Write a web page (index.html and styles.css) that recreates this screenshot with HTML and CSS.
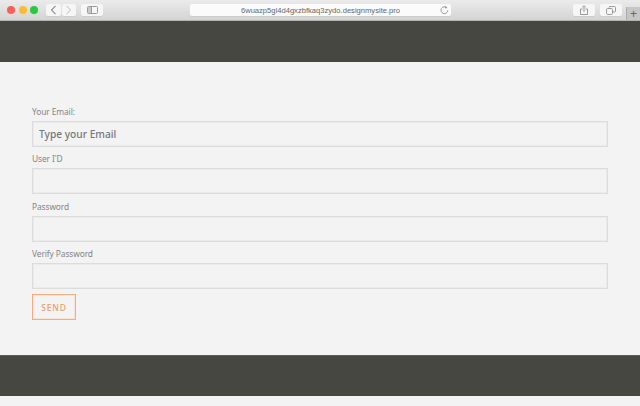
FILE: index.html
```html
<!DOCTYPE html>
<html lang="en">
<head>
  <meta charset="UTF-8">
  <meta name="viewport" content="width=device-width, initial-scale=1.0">
  <title>Sign up</title>
  <link rel="stylesheet" href="styles.css">
</head>
<body>
<div class="toolbar">
  <div class="lights">
    <span class="light red"></span>
    <span class="light yellow"></span>
    <span class="light green"></span>
  </div>
  <div class="nav-group">
    <button class="tool-btn nav-btn" type="button">
      <svg width="7" height="10" viewBox="0 0 7 10"><path d="M5.5.8 1.500 5l4 4.200" fill="none" stroke="#8c8c8c" stroke-width="1.100"/></svg>
    </button>
    <button class="tool-btn nav-btn" type="button">
      <svg width="7" height="10" viewBox="0 0 7 10"><path d="M1.500.8l4 4.200-4 4.200" fill="none" stroke="#cfcfcf" stroke-width="1.100"/></svg>
    </button>
  </div>
  <button class="tool-btn sidebar-btn" type="button">
    <svg width="11" height="8" viewBox="0 0 11 8"><rect x=".5" y=".5" width="10" height="7" rx="1" fill="none" stroke="#9a9a9a"/><rect x="1" y="1" width="3" height="6" fill="#c8c8c8"/><path d="M4.500 1v6" stroke="#9a9a9a"/></svg>
  </button>
  <div class="address">
    <span class="address-text">6wuazp5gl4d4gxzbfkaq3zydo.designmysite.pro</span>
    <svg class="reload" width="9" height="10" viewBox="0 0 9 10"><path d="M6.900 2.900A3.400 3.400 0 1 0 7.800 5.300" fill="none" stroke="#9a9a9a"/><path d="M5.400.8l2 2.200-2.500.5z" fill="#9a9a9a"/></svg>
  </div>
  <button class="tool-btn share-btn" type="button">
    <svg width="8" height="10" viewBox="0 0 8 10"><path d="M2.500 4H.5v5.500h7V4h-2M4 7V1M2.400 2.300 4 .7l1.600 1.600" fill="none" stroke="#909090" stroke-width=".9"/></svg>
  </button>
  <button class="tool-btn tabs-btn" type="button">
    <svg width="10" height="9" viewBox="0 0 10 9"><rect x=".5" y="2.500" width="6" height="6" rx="1.200" fill="none" stroke="#909090" stroke-width=".9"/><path d="M3 1.500a1 1 0 0 1 1-1h4.500a1 1 0 0 1 1 1V5a1 1 0 0 1-1 1H6.500" fill="none" stroke="#909090" stroke-width=".9"/></svg>
  </button>
  <div class="new-tab">+</div>
</div>

<div class="band"></div>

<div class="content">
  <form class="signup-form">
    <label class="field">
      <span class="field-label">Your Email:</span>
      <input class="field-input" type="text" placeholder="Type your Email">
    </label>
    <label class="field">
      <span class="field-label">User I'D</span>
      <input class="field-input" type="text">
    </label>
    <label class="field">
      <span class="field-label">Password</span>
      <input class="field-input" type="password">
    </label>
    <label class="field">
      <span class="field-label">Verify Password</span>
      <input class="field-input" type="password">
    </label>
    <button class="send-btn" type="submit">SEND</button>
  </form>
</div>

<div class="band band-bottom"></div>
<div class="page-end"></div>
</body>
</html>
```

FILE: styles.css
```css
:root {
  --band: #474741;
  --page: #f3f3f3;
  --label: #858585;
  --orange: #f3ae86;
}

* {
  box-sizing: border-box;
  margin: 0;
  padding: 0;
}

body {
  width: 640px;
  height: 406px;
  overflow: hidden;
  background: var(--page);
  font-family: "Noto Sans", "Open Sans", sans-serif;
}

.toolbar {
  height: 21px;
  display: flex;
  align-items: flex-start;
  padding: 4px 0 0 7px;
  background: linear-gradient(#ebebeb, #d4d4d4);
  border-bottom: 1px solid #b4b4b4;
}

.lights {
  display: flex;
  gap: 3.5px;
  padding-top: 2px;
  margin-right: 8px;
}

.light {
  width: 8px;
  height: 8px;
  border-radius: 50%;
}

.red { background: #fc5f5a; }
.yellow { background: #fdbb2e; }
.green { background: #29c83e; }

.tool-btn {
  height: 12px;
  display: flex;
  align-items: center;
  justify-content: center;
  background: #f6f6f6;
  border: none;
  border-radius: 2px;
  box-shadow: 0 1px 0 #cdcdcd;
}

.nav-group {
  display: flex;
  gap: 1px;
  margin-right: 5px;
}

.nav-btn { width: 14.5px; }
.sidebar-btn { width: 22px; margin-right: 87px; }
.share-btn { width: 22px; margin-right: 5px; }
.tabs-btn { width: 22px; margin-right: 4px; }

.address {
  width: 261px;
  height: 12px;
  margin-right: 122px;
  position: relative;
  display: flex;
  align-items: center;
  justify-content: center;
  background: #fbfbfb;
  border-radius: 2px;
  box-shadow: 0 1px 0 #cdcdcd;
}

.address-text {
  font-family: "Liberation Sans", sans-serif;
  font-size: 7.6px;
  color: #666;
}

.reload {
  position: absolute;
  right: 2px;
  top: 1px;
}

.new-tab {
  width: 14px;
  height: 13px;
  margin-top: 3px;
  display: flex;
  align-items: center;
  justify-content: center;
  background: #c6c6c6;
  border-left: 1px solid #aaa;
  font-family: "Liberation Sans", sans-serif;
  font-size: 12px;
  color: #666;
}

.band {
  height: 41px;
  background: var(--band);
}

.band-bottom {
  border-top: 1px solid #5c5c57;
}

.content {
  height: 293px;
  padding: 43px 32px 0;
}

.signup-form {
  display: flex;
  flex-direction: column;
  align-items: flex-start;
}

.field {
  display: block;
  width: 100%;
  margin-bottom: 5.33px;
}

.field-label {
  display: block;
  height: 16px;
  font-size: 8.4px;
  line-height: 13px;
  letter-spacing: -0.1px;
  color: var(--label);
}

.field-input {
  display: block;
  width: 100%;
  height: 26px;
  padding: 0 6px;
  background: var(--page);
  border: 1px solid #dcdcdc;
  box-shadow: inset 0 0 0 1px #ebebeb;
  font-family: inherit;
  font-size: 10.2px;
  font-weight: 500;
  outline: none;
}

.field-input::placeholder {
  color: #777;
  opacity: 1;
}

.send-btn {
  width: 44px;
  height: 26px;
  background: transparent;
  border: 1px solid var(--orange);
  box-shadow: inset 0 0 0 1px #f9e3d6;
  font-family: inherit;
  font-size: 8.5px;
  font-weight: 500;
  letter-spacing: 0.8px;
  color: #f09a67;
}

.page-end {
  height: 10px;
}
```
